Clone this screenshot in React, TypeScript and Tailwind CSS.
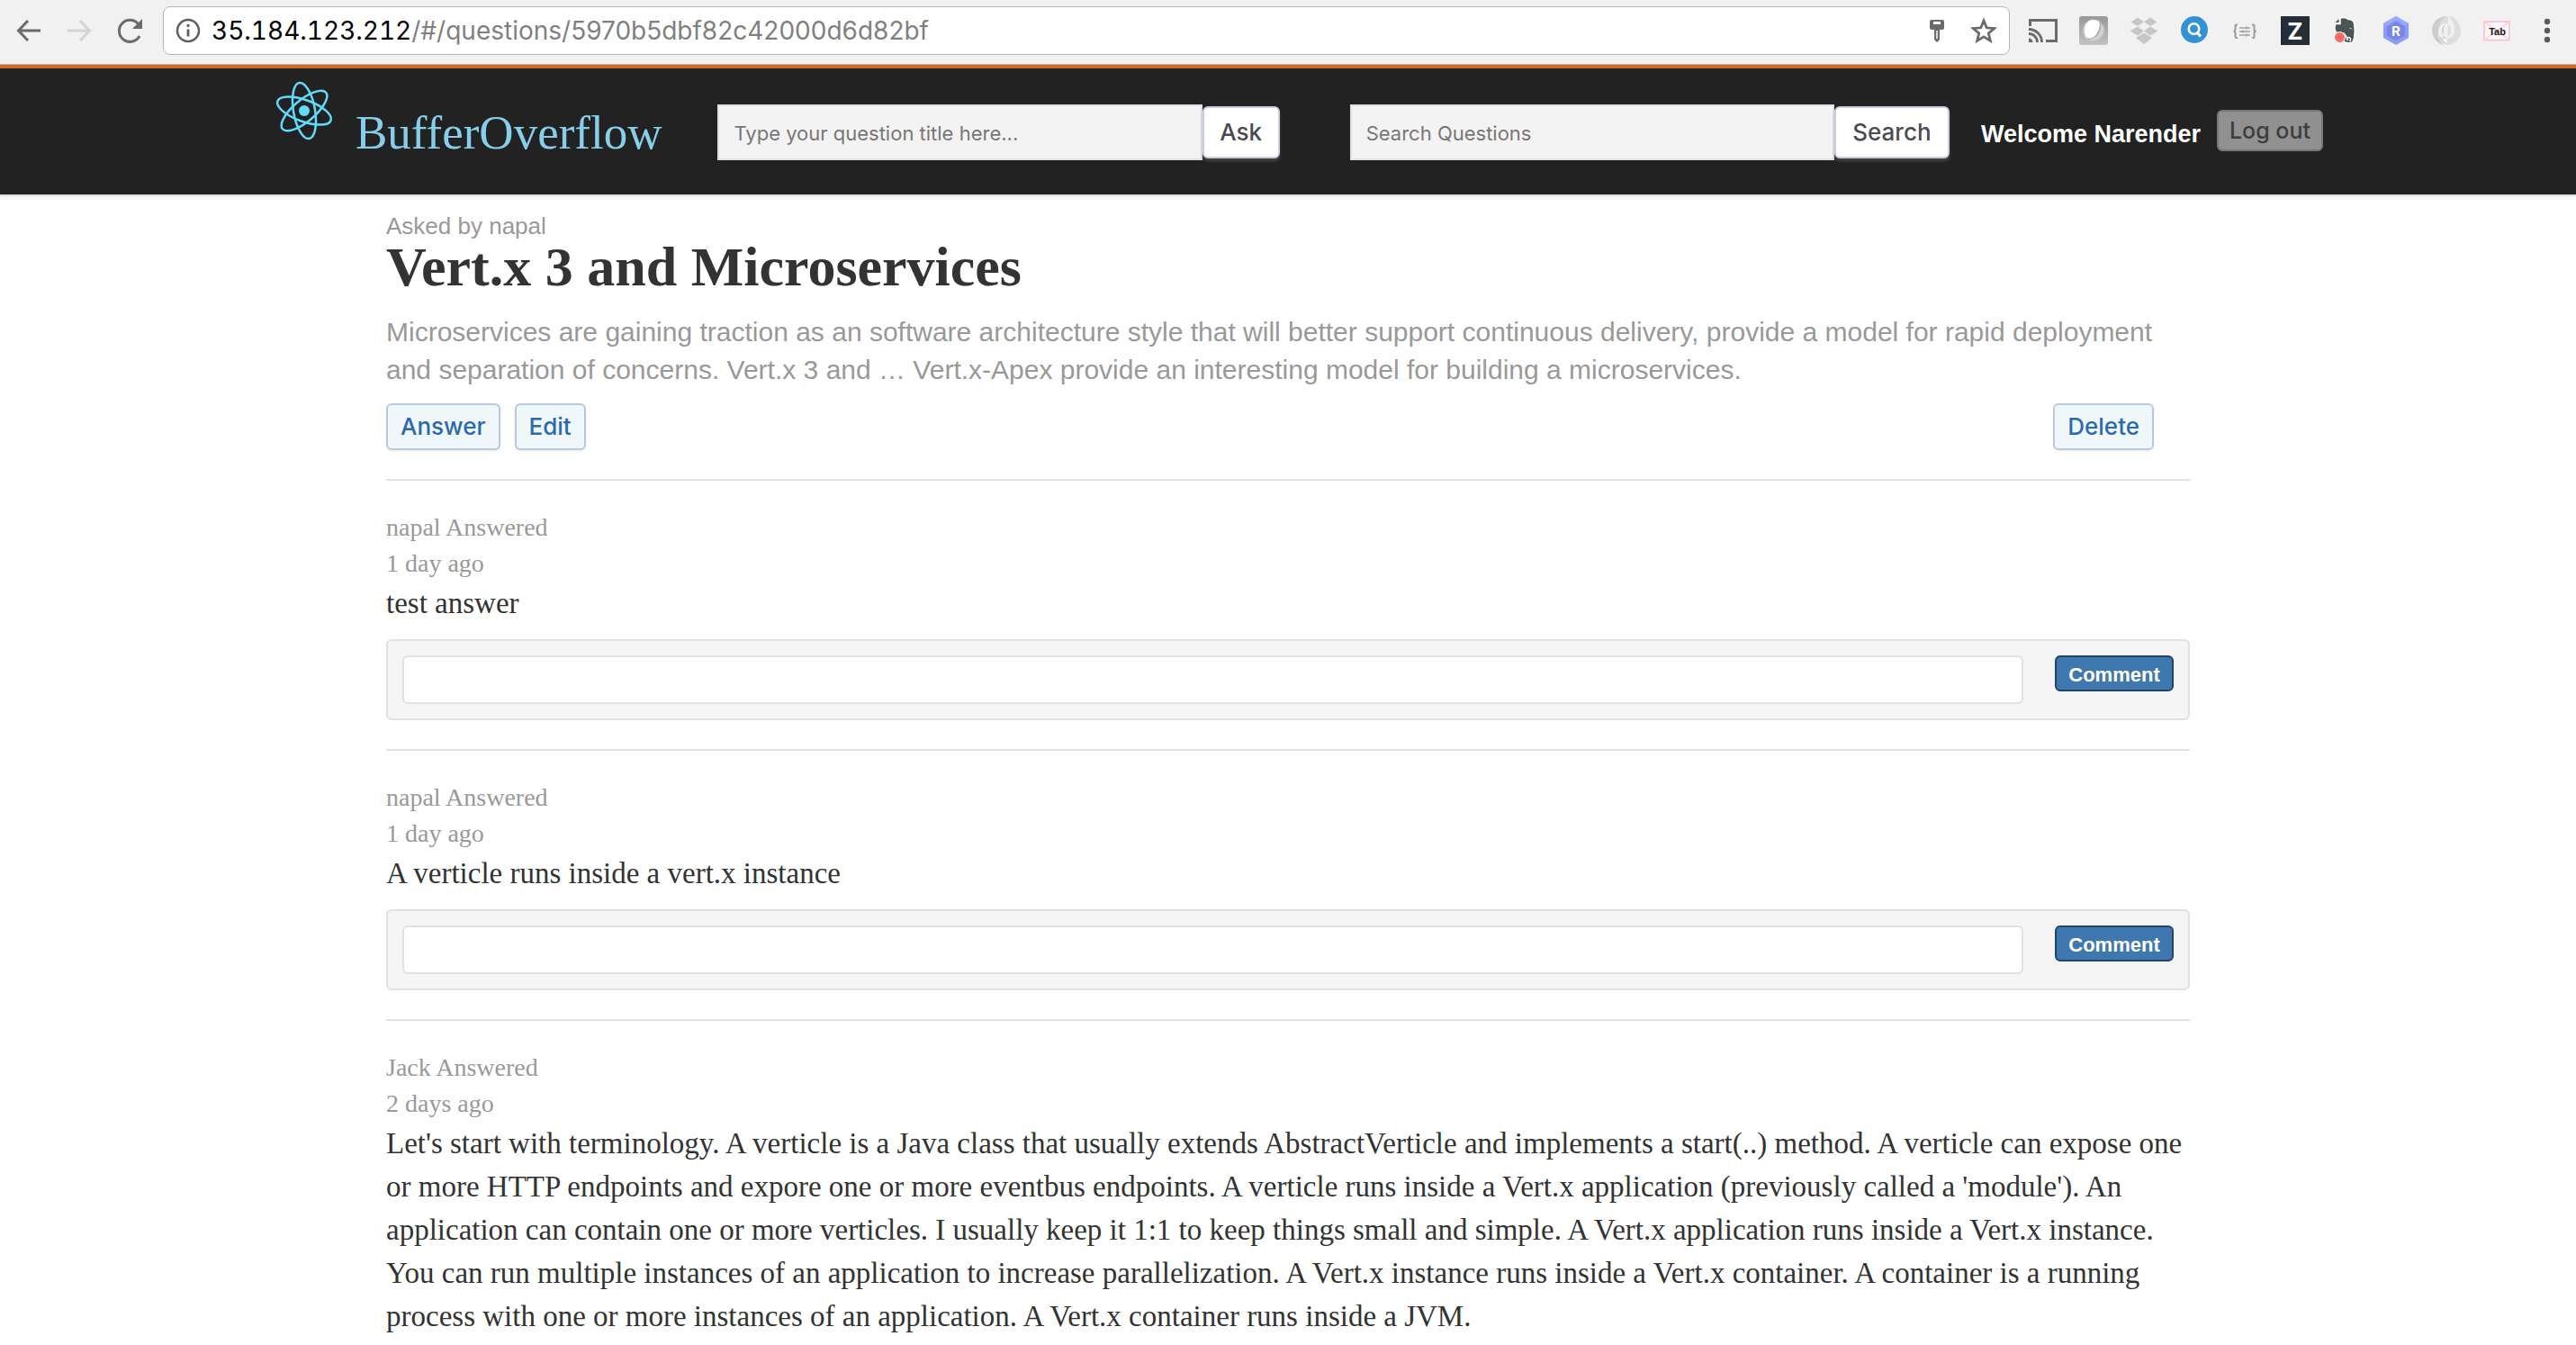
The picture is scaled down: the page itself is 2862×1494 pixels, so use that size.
import React from "react";

const SANS = "font-['Inter','Liberation_Sans',sans-serif]";
const HELV = "font-['Liberation_Sans',Arial,sans-serif]";
const SERIF = "font-['Liberation_Serif',Georgia,serif]";

type IconProps = { children: React.ReactNode; label: string };

function ToolButton({ children, label }: IconProps) {
  return (
    <button type="button" aria-label={label} className="block size-8 shrink-0">
      <svg viewBox="0 0 32 32" className="size-8" fill="none">
        {children}
      </svg>
    </button>
  );
}

function BrowserBar() {
  return (
    <div className="flex h-[72px] items-center border-b border-[#b6b4b6] bg-[#f1f1f1] pr-4 pb-[3px] pl-4">
      <div className="flex gap-6">
        <ToolButton label="Back">
          <path d="M29 16H5M15 5L4.500 16L15 27" stroke="#6b6b6b" strokeWidth="3" />
        </ToolButton>
        <ToolButton label="Forward">
          <path d="M3 16H27M17 5L27.500 16L17 27" stroke="#d4d4d4" strokeWidth="3" />
        </ToolButton>
        <ToolButton label="Reload">
          <path d="M27 22A12 12 0 1 1 25.500 8.500" stroke="#6b6b6b" strokeWidth="3" />
          <path d="M30 3V14H19Z" fill="#6b6b6b" />
        </ToolButton>
      </div>
      <div className="mx-[21px] flex h-[54px] min-w-0 flex-1 items-center rounded-lg border border-[#b4b4b4] bg-white pr-3 pl-[11px]">
        <ToolButton label="Site information">
          <circle cx="16" cy="16" r="12" stroke="#5f5f5f" strokeWidth="2.500" />
          <path d="M16 14.500V22.500M16 9V12" stroke="#5f5f5f" strokeWidth="2.800" />
        </ToolButton>
        <div
          role="textbox"
          aria-label="Address"
          className={`ml-2.5 min-w-0 flex-1 truncate text-[28px] leading-9 text-[#808080] ${SANS}`}
        >
          <span className="text-black tabular-nums">35.184.123.212</span>
          /#/questions/5970b5dbf82c42000d6d82bf
        </div>
        <div className="flex gap-5">
          <ToolButton label="Saved password">
            <path
              fillRule="evenodd"
              fill="#6b6b6b"
              d="M10 4H22A2 2 0 0 1 24 6V13A2 2 0 0 1 22 15H19V26L16 29L13 26V15H10A2 2 0 0 1 8 13V6A2 2 0 0 1 10 4ZM12 6V9H20V6ZM15.300 16V25H16.700V16Z"
            />
          </ToolButton>
          <ToolButton label="Bookmark this page">
            <path
              d="M16 5L19.200 12.800L27.700 13.500L21.300 19L23.300 27.200L16 22.800L8.700 27.200L10.700 19L4.300 13.500L12.800 12.800Z"
              stroke="#6b6b6b"
              strokeWidth="2.800"
            />
          </ToolButton>
        </div>
      </div>
      <div className="flex gap-6">
        <ToolButton label="Cast">
          <path d="M1.500 11V4.500H30.500V27.500H19" stroke="#6b6b6b" strokeWidth="3" />
          <path d="M0 14.500A14.500 14.500 0 0 1 14.500 29M0 19.500A9.500 9.500 0 0 1 9.500 29" stroke="#6b6b6b" strokeWidth="2.800" />
          <path d="M0 24.500A4.500 4.500 0 0 1 4.500 29H0Z" fill="#6b6b6b" />
        </ToolButton>
        <ToolButton label="Sphere extension">
          <defs>
            <linearGradient id="tile" x1="0" y1="0" x2="0" y2="1">
              <stop offset="0" stopColor="#989898" />
              <stop offset="1" stopColor="#c2c2c2" />
            </linearGradient>
          </defs>
          <rect width="32" height="32" rx="3" fill="url(#tile)" />
          <circle cx="16" cy="16" r="12" fill="#a9a9a9" stroke="#c6c6c6" />
          <path d="M8 24C3 16 6 5 15 4C23 4 24 8 22 14C20 21 14 27 8 24Z" fill="#ffffff" />
          <path d="M24 9C25 18 18 26 10 26C18 30 28 24 27 14C27 12 26 10 24 9Z" fill="#d2d2d2" />
        </ToolButton>
        <ToolButton label="Dropbox">
          <path
            fill="#c6c6c6"
            d="M9 1.500L16 6.200L9 11L1.500 6.500ZM23 1.500L30.500 6.500L23 11L16 6.200ZM9 11.500L16 16.500L9 21.500L0.500 16.500ZM23 11.500L31.500 16.500L23 21.500L16 16.500ZM16 18.500L7 24L16 31L25 24Z"
          />
        </ToolButton>
        <ToolButton label="Search extension">
          <circle cx="16" cy="15" r="15" fill="#3591d6" />
          <circle cx="15.500" cy="14" r="5.800" stroke="#fff" strokeWidth="2.600" />
          <path d="M19 18L23 22.500" stroke="#fff" strokeWidth="3" />
        </ToolButton>
        <ToolButton label="JSON formatter">
          <path d="M8 9.500H7Q5.500 9.500 5.500 11V14.500Q5.500 16.800 3.500 16.800Q5.500 16.800 5.500 19V22.500Q5.500 24 7 24H8M24 9.500H25Q26.500 9.500 26.500 11V14.500Q26.500 16.800 28.500 16.800Q26.500 16.800 26.500 19V22.500Q26.500 24 25 24H24" stroke="#9a9a9a" strokeWidth="2" />
          <path d="M10 13H22M10 17H22M10 21H22M18 11.500V14.500M14 15.500V18.500M18 19.500V22.500" stroke="#a0a0a0" strokeWidth="1.500" />
        </ToolButton>
        <ToolButton label="Z extension">
          <rect width="32" height="32" fill="#252d36" />
          <text x="16" y="25.500" textAnchor="middle" fontSize="26" fontWeight="700" fill="#fff" className={SANS}>
            Z
          </text>
        </ToolButton>
        <ToolButton label="Evernote">
          <path
            d="M10 2C14 1 17 1.500 19 3.500C22 3.500 25 4.500 25.500 8C26.500 15 26.500 23 24.500 27.500C23 30.500 15.500 30.500 13.500 27.500C12 25 14 22.500 17 23L14 19C11 21 6 20 4.500 16C3.500 13 4 10 5 8.500H10Z"
            fill="#4b5558"
            stroke="#fff"
            strokeWidth="1.500"
          />
          <path d="M4.500 7L8.500 3V7Z" fill="#4b5558" />
          <path d="M19 26.500C17 26.500 17 23.500 19.500 23.500C22 23.500 22 27 20.500 28" stroke="#fff" strokeWidth="1.500" />
          <path d="M20 13.500Q22 12 23.500 14.500Z" fill="#f1f1f1" />
          <circle cx="9.500" cy="23.500" r="6" fill="#fa6b6b" stroke="#fff" strokeWidth="1" />
        </ToolButton>
        <ToolButton label="R extension">
          <path d="M16 0L30 8V24L16 32L2 24V8Z" fill="#8c9cf7" />
          <path d="M16 5L26 11V22L16 27L6 22V11Z" fill="#7787e3" />
          <path d="M16 0L30 8L26 11L16 5L6 11L2 8Z" fill="#9aa8fb" />
          <text x="16" y="21.500" textAnchor="middle" fontSize="15" fontWeight="700" fill="#fff" className={SANS}>
            R
          </text>
        </ToolButton>
        <ToolButton label="Ring extension">
          <path
            d="M15 0C4 1 0 9 0 16C1 26 7 31 14 32C8 27 7 22 7 17C7 11 11 7 17 7C13 9 11 12 11 16C11 20 13 23 16 24C13 26 9 24 8 21C9 28 14 32 18 31C12 28 11 26 12 24Z"
            fill="#cdcdcd"
          />
          <path
            d="M17 32C28 31 32 23 32 16C31 6 25 1 18 0C24 5 25 10 25 15C25 21 21 25 15 25C19 23 21 20 21 16C21 12 19 9 16 8C13 6 10 8 8 11C9 5 13 1 18 0Z"
            fill="#dddddd"
          />
        </ToolButton>
        <ToolButton label="Tab extension">
          <rect x="2" y="6" width="28" height="20.500" fill="#fbf8fa" stroke="#ffb9cb" strokeWidth="1.500" />
          <path d="M2 6L30 26.500M30 6L2 26.500" stroke="#ffc5d3" strokeWidth="1.200" />
          <text x="16.500" y="20.500" textAnchor="middle" fontSize="11" fontWeight="700" fill="#151515" className={HELV}>
            Tab
          </text>
        </ToolButton>
        <ToolButton label="Browser menu">
          <g fill="#5a5a5a">
            <circle cx="16" cy="6" r="3.200" />
            <circle cx="16" cy="16" r="3.200" />
            <circle cx="16" cy="26" r="3.200" />
          </g>
        </ToolButton>
      </div>
    </div>
  );
}

type HeaderFormProps = { placeholder: string; action: string; width: string };

function HeaderForm({ placeholder, action, width }: HeaderFormProps) {
  return (
    <form className="flex min-w-0 flex-auto items-center" onSubmit={(e) => e.preventDefault()}>
      <input
        type="text"
        aria-label={placeholder}
        placeholder={placeholder}
        className={`h-[62px] w-[500px] min-w-0 flex-auto border-2 border-[#e0e0e0] bg-[#f3f3f3] px-4 pt-0.5 text-[22px] text-[#333] placeholder:text-[#777] ${SANS}`}
      />
      <button
        type="submit"
        className={`h-[58px] shrink-0 rounded-md border-2 border-[#cbcbe2] bg-white pb-0.5 text-center text-[26px] font-medium text-[#4b4b52] shadow-[0_3px_3px_rgba(120,120,120,0.4)] ${width} ${SANS}`}
      >
        {action}
      </button>
    </form>
  );
}

function Header() {
  return (
    <header className="flex h-[146px] items-center border-t-4 border-b-2 border-t-[#d2691e] border-b-[#e0e0e0] bg-[#222] pt-0.5 pr-[281px] pl-[305px] shadow-[0_2px_6px_rgba(0,0,0,0.06)]">
      <a href="#/" className="flex items-center" aria-label="BufferOverflow home">
        <svg viewBox="-33 -33 66 66" className="mr-6 mb-12 size-[66px]" fill="none" stroke="#61dafb" strokeWidth="2.500">
          <ellipse rx="31.500" ry="12" transform="rotate(20)" />
          <ellipse rx="31.500" ry="12" transform="rotate(80)" />
          <ellipse rx="31.500" ry="12" transform="rotate(140)" />
          <circle r="6" fill="#61dafb" stroke="none" />
        </svg>
        <span className={`text-[53px] leading-[60px] text-[#87ceeb] ${SERIF}`}>BufferOverflow</span>
      </a>
      <div className="ml-[62px] flex min-w-0 flex-1 gap-[78px]">
        <HeaderForm placeholder="Type your question title here..." action="Ask" width="w-[86px]" />
        <HeaderForm placeholder="Search Questions" action="Search" width="w-32" />
      </div>
      <span className={`ml-[35px] pt-1 text-[27px] font-bold whitespace-nowrap text-white ${HELV}`}>
        Welcome Narender
      </span>
      <button
        type="button"
        className={`mb-1 ml-[18px] h-[46px] w-[118px] rounded-md border-2 border-[#777] bg-[#919191] text-[25px] leading-9 font-medium text-[#3d3d3d] ${SANS}`}
      >
        Log out
      </button>
    </header>
  );
}

function LightButton({ children }: { children: React.ReactNode }) {
  return (
    <button
      type="button"
      className={`h-[52px] rounded-md border-2 border-[#b9c9dd] bg-[#eff7fb] px-3.5 text-[26px] leading-9 font-medium text-[#2a69ac] shadow-[0_2px_3px_rgba(0,0,0,0.06)] ${SANS}`}
    >
      {children}
    </button>
  );
}

type Answer = { author: string; when: string; text: string };

const answers: Answer[] = [
  { author: "napal", when: "1 day ago", text: "test answer" },
  { author: "napal", when: "1 day ago", text: "A verticle runs inside a vert.x instance" },
  {
    author: "Jack",
    when: "2 days ago",
    text: "Let's start with terminology. A verticle is a Java class that usually extends AbstractVerticle and implements a start(..) method. A verticle can expose one or more HTTP endpoints and expore one or more eventbus endpoints. A verticle runs inside a Vert.x application (previously called a 'module'). An application can contain one or more verticles. I usually keep it 1:1 to keep things small and simple. A Vert.x application runs inside a Vert.x instance. You can run multiple instances of an application to increase parallelization. A Vert.x instance runs inside a Vert.x container. A container is a running process with one or more instances of an application. A Vert.x container runs inside a JVM.",
  },
];

function AnswerItem({ answer, last }: { answer: Answer; last: boolean }) {
  return (
    <article className={`border-t-2 border-[#e1e1e1] pt-8 pb-8 ${SERIF}`}>
      <p className="text-[28px] leading-10 text-[#999]">{answer.author} Answered</p>
      <p className="text-[28px] leading-10 text-[#999]">{answer.when}</p>
      <p className="-mr-3 text-[33px] leading-[48px] text-[#333]">{answer.text}</p>
      {!last && (
        <form
          className="mt-4 flex items-start gap-[35px] rounded-md border-2 border-[#e1e1e1] bg-[#f5f5f5] p-4"
          onSubmit={(e) => e.preventDefault()}
        >
          <input
            type="text"
            aria-label="Comment text"
            className={`h-[54px] min-w-0 flex-1 rounded-md border-2 border-[#e1e1e1] bg-white px-3 text-2xl ${HELV}`}
          />
          <button
            type="submit"
            className={`h-10 w-[132px] rounded-md border-2 border-[#1f4468] bg-[#3f78ae] pt-1 text-[22px] leading-8 font-bold text-white ${HELV}`}
          >
            Comment
          </button>
        </form>
      )}
    </article>
  );
}

export default function App() {
  return (
    <div className="h-screen overflow-hidden bg-white">
      <BrowserBar />
      <Header />
      <main className="mx-auto w-full max-w-[2004px] pt-[18px]">
        <section className="pb-8">
          <p className={`text-[26px] leading-[30px] text-[#999] ${HELV}`}>Asked by napal</p>
          <h1 className={`text-[62px] leading-[60px] font-bold text-[#333] ${SERIF}`}>Vert.x 3 and Microservices</h1>
          <p className={`mt-[22px] text-[30px] leading-[42px] text-[#999] ${HELV}`}>
            Microservices are gaining traction as an software architecture style that will better support continuous
            delivery, provide a model for rapid deployment and separation of concerns. Vert.x 3 and … Vert.x-Apex
            provide an interesting model for building a microservices.
          </p>
          <div className="mt-4 flex gap-4 pr-10">
            <LightButton>Answer</LightButton>
            <LightButton>Edit</LightButton>
            <div className="ml-auto">
              <LightButton>Delete</LightButton>
            </div>
          </div>
        </section>
        {answers.map((a, i) => (
          <AnswerItem key={i} answer={a} last={i === answers.length - 1} />
        ))}
      </main>
    </div>
  );
}
